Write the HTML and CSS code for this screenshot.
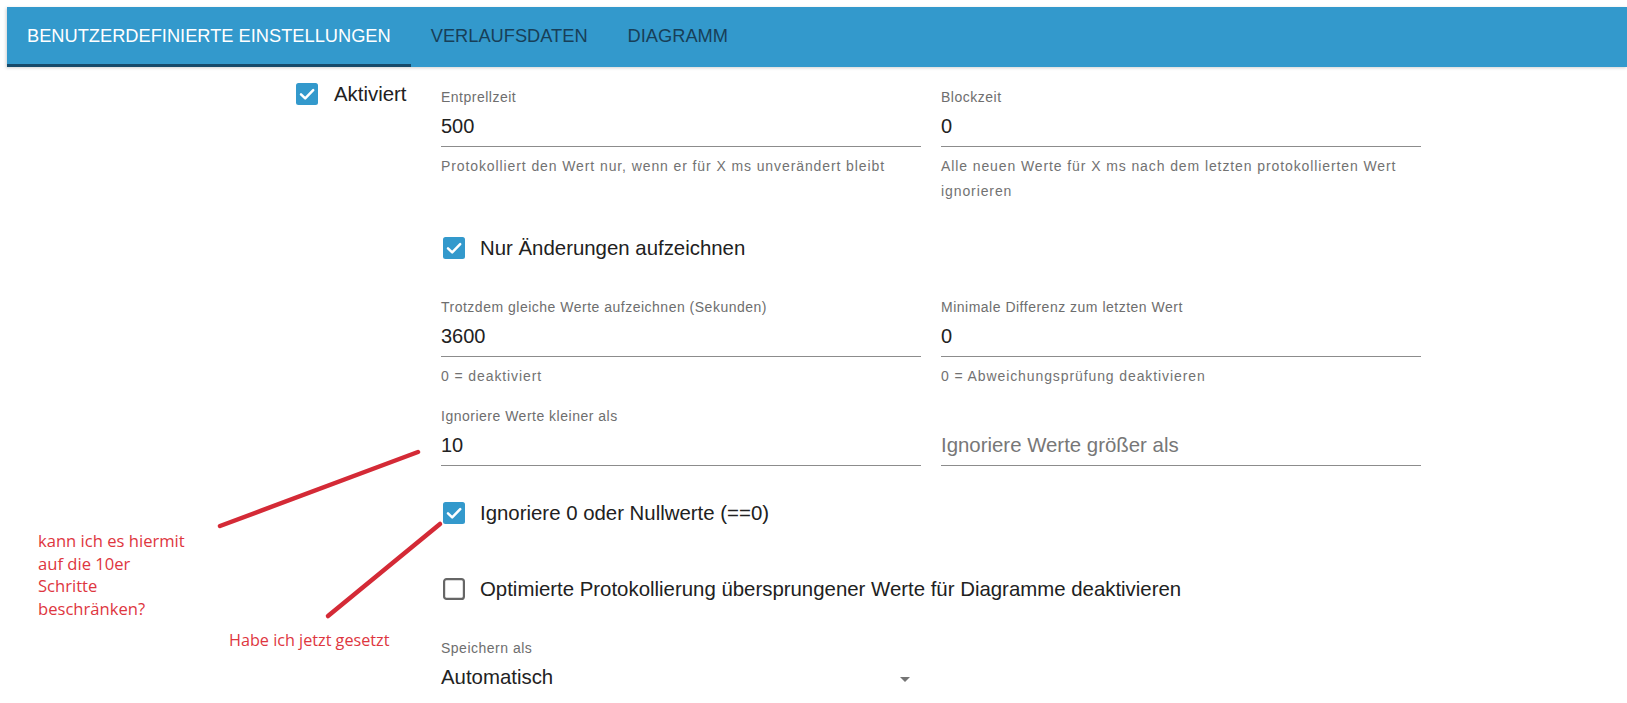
FILE: index.html
```html
<!DOCTYPE html>
<html lang="de">
<head>
<meta charset="utf-8">
<title>Benutzerdefinierte Einstellungen</title>
<link rel="stylesheet" href="styles.css">
</head>
<body>
<div class="page">
  <nav class="tabbar">
    <div class="tab active">BENUTZERDEFINIERTE EINSTELLUNGEN</div>
    <div class="tab">VERLAUFSDATEN</div>
    <div class="tab">DIAGRAMM</div>
  </nav>

  <div class="content">
    <div class="aside">
      <div class="check">
        <svg class="box" width="22" height="22" viewBox="0 0 22 22"><rect x="0" y="0" width="22" height="22" rx="2.5" fill="#3399cc"/><path d="M5 11.3 L9.2 15.4 L17.2 7.2" fill="none" stroke="#fff" stroke-width="2.5" stroke-linecap="round" stroke-linejoin="round"/></svg>
        <span class="clabel">Aktiviert</span>
      </div>
    </div>

    <div class="main">
      <div class="row2 r1">
        <div class="field">
          <div class="flabel">Entprellzeit</div>
          <div class="finput">500</div>
          <div class="fhelp">Protokolliert den Wert nur, wenn er für X ms unverändert bleibt</div>
        </div>
        <div class="field">
          <div class="flabel">Blockzeit</div>
          <div class="finput">0</div>
          <div class="fhelp">Alle neuen Werte für X ms nach dem letzten protokollierten Wert ignorieren</div>
        </div>
      </div>

      <div class="check mcheck r2">
        <svg class="box" width="22" height="22" viewBox="0 0 22 22"><rect x="0" y="0" width="22" height="22" rx="2.5" fill="#3399cc"/><path d="M5 11.3 L9.2 15.4 L17.2 7.2" fill="none" stroke="#fff" stroke-width="2.5" stroke-linecap="round" stroke-linejoin="round"/></svg>
        <span class="clabel">Nur Änderungen aufzeichnen</span>
      </div>

      <div class="row2 r3">
        <div class="field">
          <div class="flabel">Trotzdem gleiche Werte aufzeichnen (Sekunden)</div>
          <div class="finput">3600</div>
          <div class="fhelp">0 = deaktiviert</div>
        </div>
        <div class="field">
          <div class="flabel">Minimale Differenz zum letzten Wert</div>
          <div class="finput">0</div>
          <div class="fhelp">0 = Abweichungsprüfung deaktivieren</div>
        </div>
      </div>

      <div class="row2 r4">
        <div class="field">
          <div class="flabel">Ignoriere Werte kleiner als</div>
          <div class="finput">10</div>
        </div>
        <div class="field">
          <div class="flabel"></div>
          <div class="finput placeholder">Ignoriere Werte größer als</div>
        </div>
      </div>

      <div class="check mcheck r5">
        <svg class="box" width="22" height="22" viewBox="0 0 22 22"><rect x="0" y="0" width="22" height="22" rx="2.5" fill="#3399cc"/><path d="M5 11.3 L9.2 15.4 L17.2 7.2" fill="none" stroke="#fff" stroke-width="2.5" stroke-linecap="round" stroke-linejoin="round"/></svg>
        <span class="clabel">Ignoriere 0 oder Nullwerte (==0)</span>
      </div>

      <div class="check mcheck r6">
        <svg class="box" width="22" height="22" viewBox="0 0 22 22"><rect x="1.1" y="1.1" width="19.8" height="19.8" rx="2.5" fill="none" stroke="#666" stroke-width="2.2"/></svg>
        <span class="clabel">Optimierte Protokollierung übersprungener Werte für Diagramme deaktivieren</span>
      </div>

      <div class="field select r7">
        <div class="flabel">Speichern als</div>
        <div class="finput selectinput">
          <span>Automatisch</span>
          <svg class="arrow" width="10" height="5" viewBox="0 0 10 5"><path d="M0 0 L10 0 L5 5 Z" fill="#757575"/></svg>
        </div>
      </div>
    </div>
  </div>

  <svg class="annot" width="1627" height="703" viewBox="0 0 1627 703">
    <line x1="220" y1="526" x2="418" y2="452" stroke="#d42a36" stroke-width="4.5" stroke-linecap="round"/>
    <line x1="328" y1="616" x2="440" y2="524" stroke="#d42a36" stroke-width="4.5" stroke-linecap="round"/>
  </svg>
  <div class="note n1">kann ich es hiermit<br>auf die 10er<br>Schritte<br>beschränken?</div>
  <div class="note n2">Habe ich jetzt gesetzt</div>
</div>
</body>
</html>
```

FILE: styles.css
```css
html, body {
  margin: 0;
  padding: 0;
  background: #ffffff;
}

body {
  font-family: "Liberation Sans", Arial, sans-serif;
  color: #212121;
  overflow: hidden;
}

.page {
  position: relative;
  width: 1627px;
  height: 703px;
  padding-top: 7px;
  box-sizing: border-box;
}

/* Tab bar */
.tabbar {
  margin-left: 7px;
  height: 60px;
  background: #3399cc;
  display: flex;
  box-shadow: -1px 1px 3px rgba(0, 0, 0, 0.18);
}

.tab {
  box-sizing: border-box;
  height: 60px;
  padding: 19px 20px 0;
  font-size: 18.25px;
  line-height: 20px;
  color: #183f58;
  white-space: nowrap;
}

.tab.active {
  color: #ffffff;
  border-bottom: 3px solid #164a6a;
}

/* Content */
.content {
  display: flex;
  padding-left: 296px;
}

.aside {
  width: 145px;
  padding-top: 16px;
}

.main {
  width: 980px;
  padding-top: 22px;
}

.row2 {
  display: grid;
  grid-template-columns: 480px 480px;
  column-gap: 20px;
  align-items: start;
}

.r2 { margin-top: 33px; }
.r3 { margin-top: 40px; }
.r4 { margin-top: 19px; }
.r5 { margin-top: 36px; }
.r6 { margin-top: 54px; }
.r7 { margin-top: 40px; }

/* Checkbox */
.check {
  display: flex;
  align-items: center;
  height: 22px;
}

.check .box {
  flex: none;
  display: block;
}

.mcheck .box {
  margin-left: 2px;
}

.clabel {
  margin-left: 16px;
  font-size: 20.4px;
  line-height: 22px;
  color: #212121;
  white-space: nowrap;
}

.mcheck .clabel {
  margin-left: 15px;
}

/* Text fields */
.field {
  display: flex;
  flex-direction: column;
}

.flabel {
  height: 16px;
  font-size: 14px;
  line-height: 16px;
  letter-spacing: 0.5px;
  color: #6e6e6e;
  white-space: nowrap;
}

.finput {
  padding: 8px 0 7px;
  font-size: 20px;
  line-height: 26px;
  color: #222222;
  border-bottom: 1px solid #8c8c8c;
}

.finput.placeholder {
  color: #777777;
  font-size: 20.4px;
}

.fhelp {
  margin-top: 7px;
  font-size: 14px;
  line-height: 25px;
  letter-spacing: 0.9px;
  color: #727272;
}

.select {
  width: 480px;
}

.selectinput {
  display: flex;
  align-items: center;
  justify-content: space-between;
  padding-bottom: 16px;
  font-size: 20.4px;
}

.selectinput .arrow {
  display: block;
  margin-right: 11px;
  margin-top: 5px;
}

/* Annotations drawn over the screenshot */
.annot {
  position: absolute;
  left: 0;
  top: 0;
  pointer-events: none;
}

.note {
  position: absolute;
  font-family: "Open Sans", "Liberation Sans", sans-serif;
  font-size: 16.6px;
  line-height: 22.7px;
  color: #de3640;
  white-space: nowrap;
}

.n1 {
  left: 38px;
  top: 530px;
}

.n2 {
  left: 229px;
  top: 629px;
  font-size: 16.2px;
}
```
